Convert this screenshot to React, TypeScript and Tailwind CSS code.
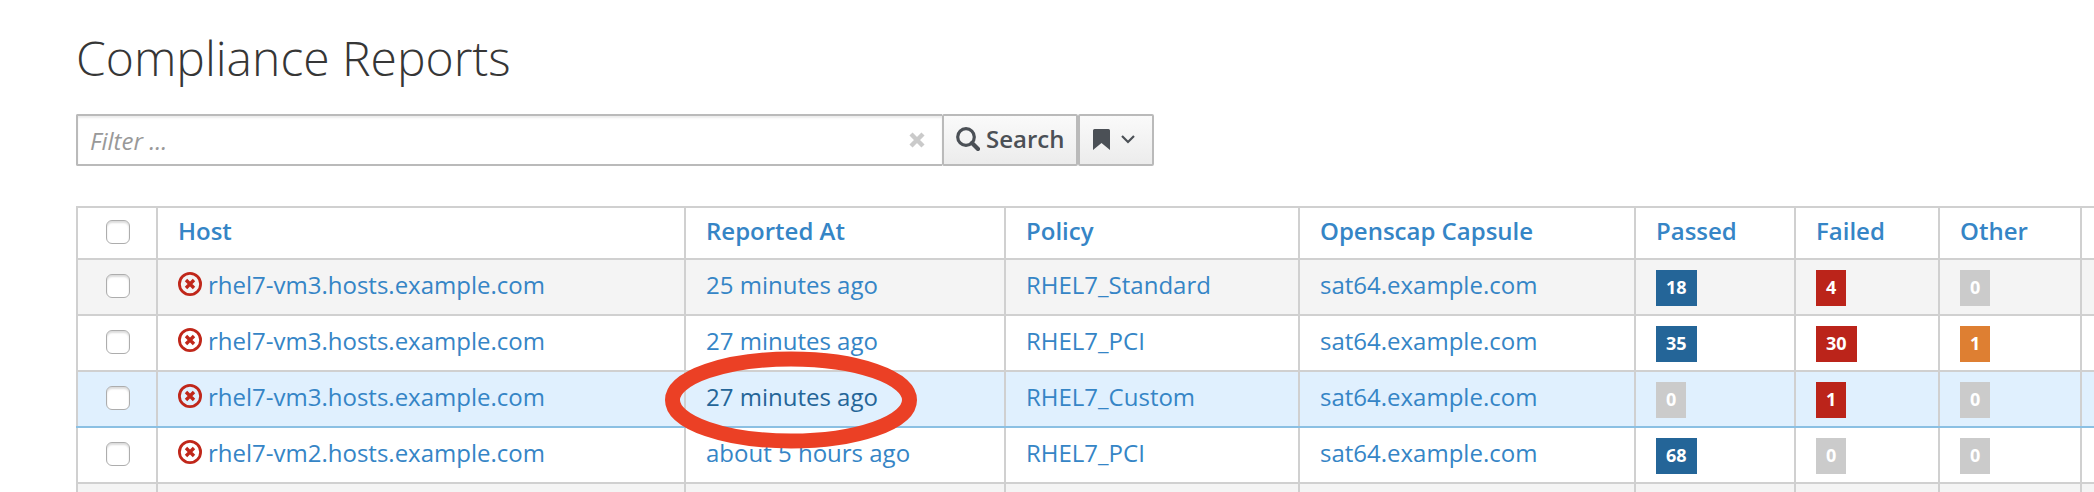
import React from "react";

type Tone = "blue" | "red" | "orange";

interface Report {
  host: string;
  reported: string;
  policy: string;
  capsule: string;
  passed: number;
  failed: number;
  other: number;
  active?: boolean;
}

const reports: Report[] = [
  { host: "rhel7-vm3.hosts.example.com", reported: "25 minutes ago", policy: "RHEL7_Standard", capsule: "sat64.example.com", passed: 18, failed: 4, other: 0 },
  { host: "rhel7-vm3.hosts.example.com", reported: "27 minutes ago", policy: "RHEL7_PCI", capsule: "sat64.example.com", passed: 35, failed: 30, other: 1 },
  { host: "rhel7-vm3.hosts.example.com", reported: "27 minutes ago", policy: "RHEL7_Custom", capsule: "sat64.example.com", passed: 0, failed: 1, other: 0, active: true },
  { host: "rhel7-vm2.hosts.example.com", reported: "about 5 hours ago", policy: "RHEL7_PCI", capsule: "sat64.example.com", passed: 68, failed: 0, other: 0 },
];

const headings = ["Host", "Reported At", "Policy", "Openscap Capsule", "Passed", "Failed", "Other"];

const tones: Record<Tone, string> = {
  blue: "bg-[#246598]",
  red: "bg-[#bb241a]",
  orange: "bg-[#de7f32]",
};

function Badge({ value, tone }: { value: number; tone: Tone }) {
  return (
    <span className={`mt-[6px] block h-9 w-fit px-[10px] text-lg leading-[34px] font-bold text-white ${value === 0 ? "bg-[#cbcbcb]" : tones[tone]}`}>
      {value}
    </span>
  );
}

function Check({ label }: { label: string }) {
  return (
    <input
      type="checkbox"
      aria-label={label}
      className="mx-auto block size-6 appearance-none rounded-md border border-[#adadad] bg-white shadow-[inset_0_2px_2px_rgba(0,0,0,0.14)] checked:bg-[#3585c6]"
    />
  );
}

function ErrorIcon() {
  return (
    <svg viewBox="0 0 24 24" className="mb-[2px] size-6 shrink-0" aria-hidden="true">
      <circle cx="12" cy="12" r="10.6" fill="none" stroke="#c0271a" strokeWidth="2.8" />
      <path d="M8 8 L16 16 M16 8 L8 16" stroke="#c0271a" strokeWidth="3.4" />
    </svg>
  );
}

const line = "border-2 border-[#d0d0d0]";
const cell = `${line} px-5 pt-0 pb-1`;
const checkCell = `${line} pt-0 pr-5 pb-[2px] pl-[22px]`;
const button = "flex items-center rounded-[2px] border-2 border-[#bababa] bg-linear-to-b from-[#fafafa] to-[#ececec] pb-[2px] text-[#4b5056]";

export default function App() {
  return (
    <main className="overflow-hidden bg-white pt-[26px] pl-19 font-['Open_Sans',sans-serif] text-2xl text-[#363636]">
      <h1 className="text-5xl leading-16 font-light">Compliance Reports</h1>

      <form className="mt-6 flex h-[52px] w-[1078px] max-w-full" onSubmit={(e) => e.preventDefault()}>
        <div className="flex min-w-0 grow items-center rounded-l-[2px] border-2 border-r-0 border-[#bababa] pr-[17px] pl-3 shadow-[inset_0_2px_2px_rgba(0,0,0,0.08)]">
          <input
            type="text"
            aria-label="Filter"
            placeholder="Filter ..."
            className="min-w-0 grow bg-transparent pt-[2px] outline-none placeholder:text-[#999999] placeholder:italic"
          />
          <button type="button" aria-label="Clear" className="shrink-0">
            <svg viewBox="0 0 16 16" className="size-4" aria-hidden="true">
              <path d="M2 2 L14 14 M14 2 L2 14" stroke="#cacaca" strokeWidth="4.4" />
            </svg>
          </button>
        </div>
        <button type="submit" className={`${button} w-[136px] gap-[6px] pl-3 font-semibold`}>
          <svg viewBox="0 0 24 24" className="size-6 shrink-0" aria-hidden="true">
            <circle cx="10" cy="10" r="8.3" fill="none" stroke="currentColor" strokeWidth="3.2" />
            <path d="M16 16 L22 22" stroke="currentColor" strokeWidth="4.2" strokeLinecap="round" />
          </svg>
          Search
        </button>
        <button type="button" aria-label="Bookmarks" className={`${button} w-19 gap-[11px] pl-[13px]`}>
          <svg viewBox="0 0 17 21" className="h-[21px] w-[17px] shrink-0" aria-hidden="true">
            <path d="M1.5 0 H15.5 Q17 0 17 1.5 V21 L8.5 14 L0 21 V1.5 Q0 0 1.5 0 Z" fill="currentColor" />
          </svg>
          <svg viewBox="0 0 14 9" className="h-[9px] w-[14px] shrink-0" aria-hidden="true">
            <path d="M1 1 L7 7 L13 1" fill="none" stroke="currentColor" strokeWidth="2.2" />
          </svg>
        </button>
      </form>

      <table className="mt-10 w-full table-fixed border-collapse text-left">
        <colgroup>
          <col className="w-20" />
          <col className="w-[528px]" />
          <col className="w-[320px]" />
          <col className="w-[294px]" />
          <col className="w-[336px]" />
          <col className="w-[160px]" />
          <col className="w-[144px]" />
          <col className="w-[142px]" />
          <col />
        </colgroup>
        <thead>
          <tr className="h-[52px]">
            <th className={checkCell}><Check label="Select all reports" /></th>
            {headings.map((h) => (
              <th key={h} className={`${cell} font-semibold text-[#3585c6]`}>
                <a href="#" className="block leading-8">{h}</a>
              </th>
            ))}
            <th className={`${cell} border-r-0`} />
          </tr>
        </thead>
        <tbody className="text-[#3585c6]">
          {reports.map((r, i) => (
            <tr key={i} className={`h-14 ${r.active ? "bg-[#e0f0fe] *:border-b-[#8bc0e3]" : i % 2 === 0 ? "bg-[#f4f4f4]" : ""}`}>
              <td className={checkCell}><Check label={`Select report ${i + 1}`} /></td>
              <td className={cell}>
                <a href="#" className="flex items-center gap-[6px] leading-8"><ErrorIcon />{r.host}</a>
              </td>
              <td className={cell}>
                <a href="#" className={`block leading-8 whitespace-nowrap ${r.active ? "relative z-10 text-[#246598]" : ""}`}>
                  {r.reported}
                  {r.active && (
                    <svg viewBox="0 0 252 98" className="pointer-events-none absolute -top-[30px] -left-[41px] h-[98px] w-[252px] max-w-none" aria-hidden="true">
                      <ellipse cx="126" cy="49" rx="118.5" ry="41" fill="none" stroke="#eb4025" strokeWidth="15" />
                    </svg>
                  )}
                </a>
              </td>
              <td className={cell}><a href="#" className="block leading-8">{r.policy}</a></td>
              <td className={cell}><a href="#" className="block leading-8">{r.capsule}</a></td>
              <td className={cell}><Badge value={r.passed} tone="blue" /></td>
              <td className={cell}><Badge value={r.failed} tone="red" /></td>
              <td className={cell}><Badge value={r.other} tone="orange" /></td>
              <td className={`${cell} border-r-0`} />
            </tr>
          ))}
          <tr className="h-[9px] bg-[#f4f4f4]">
            {Array.from({ length: 9 }, (_, i) => (
              <td key={i} className="border-x-2 border-[#d0d0d0] p-0 last:border-r-0" />
            ))}
          </tr>
        </tbody>
      </table>
    </main>
  );
}
